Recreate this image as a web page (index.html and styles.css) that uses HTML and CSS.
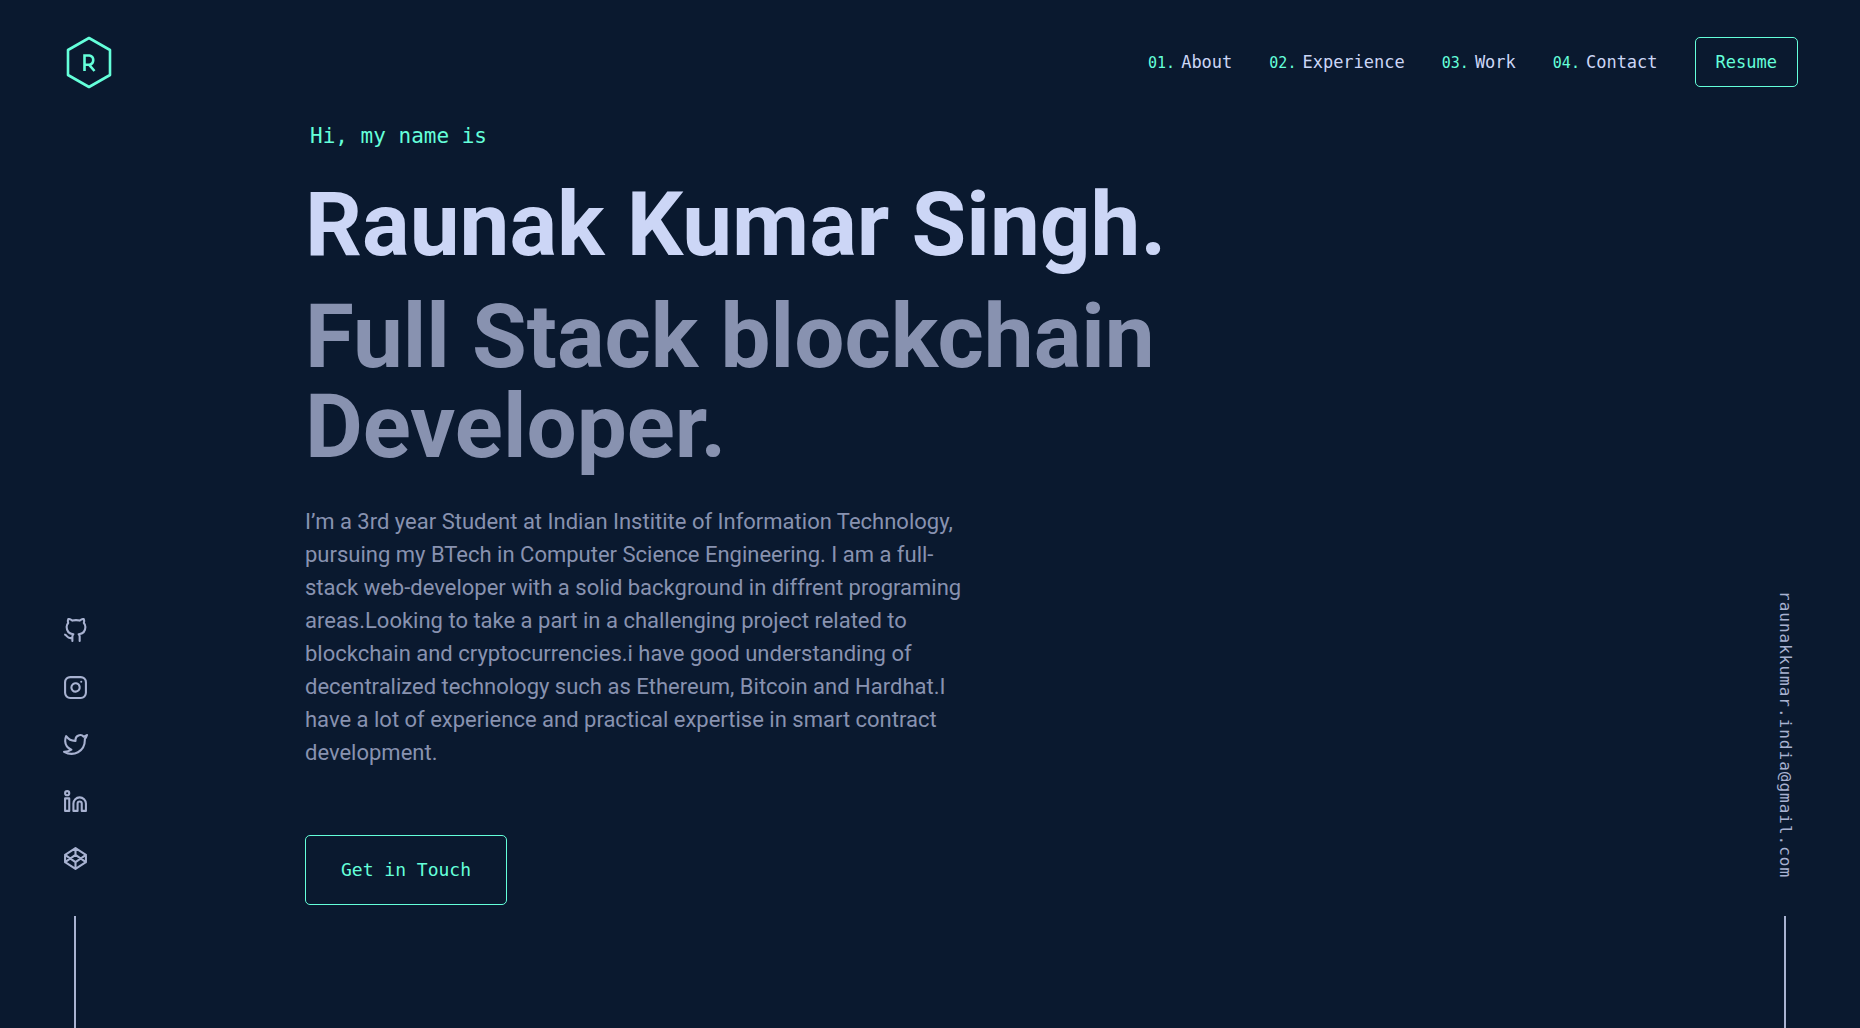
FILE: index.html
```html
<!DOCTYPE html>
<html lang="en">
<head>
<meta charset="utf-8">
<meta name="viewport" content="width=device-width, initial-scale=1">
<title>Raunak Kumar Singh</title>
<link rel="stylesheet" href="styles.css">
</head>
<body>
<header class="header">
  <a class="logo" href="#top" aria-label="Home">
    <svg viewBox="0 0 46 54" width="46" height="54" fill="none" stroke="currentColor" stroke-width="3">
      <path d="M23 3 44 15V40L23 52 2 40V15Z" stroke-width="2.600" stroke-linejoin="round"/>
      <path d="M18.500 36V20.500H23.500A4.700 4.700 0 0 1 23.500 29.700H18.500M23 29.700 28.500 36" stroke-width="2.600"/>
    </svg>
  </a>
  <nav class="nav">
    <ol class="nav-list">
      <li><a href="#about"><span class="num">01.</span>About</a></li>
      <li><a href="#experience"><span class="num">02.</span>Experience</a></li>
      <li><a href="#work"><span class="num">03.</span>Work</a></li>
      <li><a href="#contact"><span class="num">04.</span>Contact</a></li>
    </ol>
    <a class="button button-small" href="#resume">Resume</a>
  </nav>
</header>
<div class="layout">
  <aside class="rail" aria-label="Social links">
    <ul class="social">
      <li><a href="#github" aria-label="GitHub"><svg class="icon" viewBox="0 0 24 24"><path d="M9 19c-5 1.500-5-2.500-7-3m14 6v-3.870a3.370 3.370 0 0 0-.94-2.610c3.140-.35 6.440-1.540 6.440-7A5.440 5.440 0 0 0 20 4.770 5.070 5.070 0 0 0 19.910 1S18.730.65 16 2.480a13.380 13.380 0 0 0-7 0C6.270.65 5.090 1 5.090 1A5.070 5.070 0 0 0 5 4.770a5.440 5.440 0 0 0-1.500 3.780c0 5.420 3.300 6.610 6.440 7A3.370 3.370 0 0 0 9 18.130V22"/></svg></a></li>
      <li><a href="#instagram" aria-label="Instagram"><svg class="icon" viewBox="0 0 24 24"><rect x="2" y="2" width="20" height="20" rx="5"/><path d="M16 11.370A4 4 0 1 1 12.630 8 4 4 0 0 1 16 11.370z"/><path d="M17.500 6.500h.01"/></svg></a></li>
      <li><a href="#twitter" aria-label="Twitter"><svg class="icon" viewBox="0 0 24 24"><path d="M23 3a10.900 10.900 0 0 1-3.140 1.530 4.480 4.480 0 0 0-7.860 3v1A10.660 10.660 0 0 1 3 4s-4 9 5 13a11.640 11.640 0 0 1-7 2c9 5 20 0 20-11.500a4.500 4.500 0 0 0-.08-.83A7.720 7.720 0 0 0 23 3z"/></svg></a></li>
      <li><a href="#linkedin" aria-label="LinkedIn"><svg class="icon" viewBox="0 0 24 24"><path d="M16 8a6 6 0 0 1 6 6v7h-4v-7a2 2 0 0 0-2-2 2 2 0 0 0-2 2v7h-4v-7a6 6 0 0 1 6-6z"/><rect x="2" y="9" width="4" height="12"/><circle cx="4" cy="4" r="2"/></svg></a></li>
      <li><a href="#codepen" aria-label="CodePen"><svg class="icon" viewBox="0 0 24 24"><path d="M12 2 22 8.500V15.500L12 22 2 15.500V8.500zM12 22V15.500M22 8.500 12 15.500 2 8.500M2 15.500 12 8.500 22 15.500M12 2V8.500"/></svg></a></li>
    </ul>
  </aside>
  <main class="hero" id="top">
    <p class="greeting">Hi, my name is</p>
    <h1 class="name">Raunak Kumar Singh.</h1>
    <h2 class="role">Full Stack blockchain Developer.</h2>
    <p class="bio">I’m a 3rd year Student at Indian Institite of Information Technology, pursuing my BTech in Computer Science Engineering. I am a full-stack web-developer with a solid background in diffrent programing areas.Looking to take a part in a challenging project related to blockchain and cryptocurrencies.i have good understanding of decentralized technology such as Ethereum, Bitcoin and Hardhat.I have a lot of experience and practical expertise in smart contract development.</p>
    <a class="button button-large" href="#contact">Get in Touch</a>
  </main>
  <aside class="rail" aria-label="Email">
    <a class="email" href="mailto:raunakkumar.india@gmail.com">raunakkumar.india@gmail.com</a>
  </aside>
</div>
</body>
</html>
```
FILE: styles.css
```css
:root {
  --navy: #0a192f;
  --green: #64ffda;
  --slate: #8892b0;
  --light-slate: #a8b2d1;
  --lightest-slate: #ccd6f6;
  --mono: "DejaVu Sans Mono", "Liberation Mono", monospace;
  --sans: Roboto, "Liberation Sans", sans-serif;
}

* { box-sizing: border-box; }

body {
  display: flex;
  flex-direction: column;
  min-height: 100vh;
  margin: 0;
  background: var(--navy);
  color: var(--slate);
  font-family: var(--sans);
}

a { color: inherit; text-decoration: none; }
ul, ol { margin: 0; padding: 0; list-style: none; }
h1, h2, p { margin: 0; }
svg { display: block; }

.header {
  display: flex;
  align-items: center;
  justify-content: space-between;
  height: 124px;
  padding: 0 62px 0 66px;
}

.logo { color: var(--green); }

.nav,
.nav-list {
  display: flex;
  align-items: center;
  gap: 37px;
  font-family: var(--mono);
  font-size: 17px;
}

.nav { color: var(--lightest-slate); }
.num { margin-right: 6px; color: var(--green); font-size: 15px; }

.button {
  display: inline-block;
  border: 1px solid var(--green);
  border-radius: 5px;
  color: var(--green);
  font-family: var(--mono);
}

.button-small { padding: 12px 20px; font-size: 17px; line-height: 24px; }
.button-large { margin-top: 66px; padding: 22px 35px; font-size: 18px; line-height: 24px; }

.layout {
  display: grid;
  flex: 1;
  grid-template-columns: 150px 1fr 150px;
}

.hero { width: 100%; max-width: 1250px; margin: 0 auto; }

.greeting {
  padding-left: 5px;
  color: var(--green);
  font-family: var(--mono);
  font-size: 21px;
  line-height: 24px;
}

.name,
.role { max-width: 900px; font-size: 89px; font-weight: 700; line-height: 90px; }
.name { margin-top: 32px; color: var(--lightest-slate); }
.role { margin-top: 22px; }

.bio { max-width: 660px; margin-top: 33px; font-size: 22px; line-height: 33px; }

.rail {
  display: flex;
  flex-direction: column;
  align-items: center;
  justify-content: flex-end;
  color: var(--light-slate);
}

.rail::after {
  width: 2px;
  height: 112px;
  background: currentColor;
  content: "";
}

.social { display: grid; gap: 32px; margin-bottom: 45px; }

.icon {
  width: 25px;
  height: 25px;
  fill: none;
  stroke: currentColor;
  stroke-width: 2;
  stroke-linecap: round;
  stroke-linejoin: round;
}

.email {
  margin-bottom: 38px;
  font-family: var(--mono);
  font-size: 16px;
  letter-spacing: 1px;
  line-height: 20px;
  writing-mode: vertical-rl;
}
```
